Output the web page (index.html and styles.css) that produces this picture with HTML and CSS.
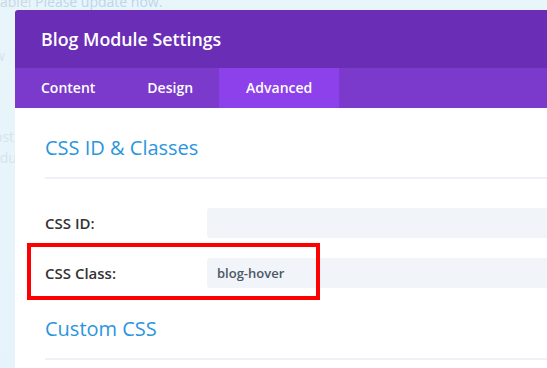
FILE: index.html
```html
<!DOCTYPE html>
<html lang="en">
<head>
  <meta charset="UTF-8">
  <meta name="viewport" content="width=device-width, initial-scale=1.0">
  <title>Blog Module Settings</title>
  <link rel="stylesheet" href="styles.css">
</head>
<body>
  <div class="backdrop">
    <p class="notice">able! <a href="#">Please update now.</a></p>
    <p class="ghost ghost-w">w</p>
    <p class="ghost ghost-post">ost</p>
    <p class="ghost ghost-rdu">rdu</p>
  </div>

  <div class="modal">
    <div class="modal-header">
      <h1>Blog Module Settings</h1>
    </div>
    <div class="tabs">
      <span class="tab">Content</span>
      <span class="tab">Design</span>
      <span class="tab active">Advanced</span>
    </div>
    <div class="modal-body">
      <h2 class="section-title">CSS ID &amp; Classes</h2>
      <div class="fields">
        <div class="field">
          <label for="cssId">CSS ID:</label>
          <input type="text" id="cssId">
        </div>
        <div class="field highlight">
          <label for="cssClass">CSS Class:</label>
          <input type="text" id="cssClass" value="blog-hover">
        </div>
      </div>
      <h2 class="section-title">Custom CSS</h2>
      <div class="fields"></div>
    </div>
  </div>
</body>
</html>
```

FILE: styles.css
```css
html, body { margin: 0; height: 100%; }
body { font-family: "Open Sans", "Liberation Sans", sans-serif; background: linear-gradient(180deg, #e8f5fb, #e6f3fa); overflow: hidden; position: relative; }

.backdrop { color: #c9d8e2; font-size: 14px; }
.backdrop p { margin: 0; }
.notice { margin-top: -8px !important; line-height: 20px; }
.notice a { color: #bcd7ea; text-decoration: none; }
.ghost { color: #d3e4ee; margin-left: -6px !important; }
.ghost-w { margin-top: 34px !important; }
.ghost-post { margin-top: 62px !important; }
.ghost-rdu { margin-top: 2px !important; }

.modal { position: absolute; left: 15px; top: 10px; width: 700px; height: 500px; background: #fff; border-radius: 3px 3px 0 0; overflow: hidden; }
.modal-header { background: #6a2db6; height: 58px; display: flex; align-items: center; padding-left: 26px; }
.modal-header h1 { margin: 0; color: #fff; font-size: 17.8px; font-weight: 600; }

.tabs { background: #7b3acc; height: 40px; display: flex; }
.tab { color: #fff; font-size: 14px; font-weight: 600; padding: 0 26px; line-height: 40px; }
.tab.active { background: #8d41ea; padding: 0 27px; border-right: 1px solid #7d3ad0; }

.modal-body { padding: 26px 0 0 30px; }
.section-title { margin: 0; color: #2b95de; font-size: 20px; font-weight: 400; line-height: 28px; }
.fields { border-top: 2px solid #eef2f6; margin-top: 15px; padding-top: 29px; }
.field { display: flex; align-items: center; height: 30px; margin-bottom: 20px; position: relative; }
.field label { width: 162px; color: #333; font-size: 15px; font-weight: 600; }
.field input { flex: 1; height: 30px; box-sizing: border-box; border: none; border-radius: 3px; background: #f1f4f8; padding: 0 10px; font-family: inherit; font-size: 13px; font-weight: 600; color: #4c5866; outline: none; }
.field.highlight { margin-bottom: 27px; }
.field.highlight::after { content: ""; position: absolute; left: -18px; top: -15px; width: 293px; height: 57px; box-sizing: border-box; border: 4px solid #ff0000; pointer-events: none; }
```
